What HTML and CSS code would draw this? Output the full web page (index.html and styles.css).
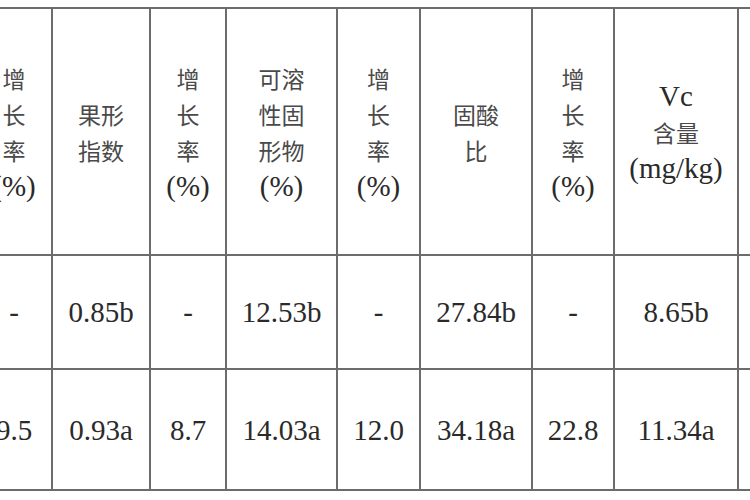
FILE: index.html
```html
<!DOCTYPE html>
<html lang="zh">
<head>
<meta charset="utf-8">
<title>表</title>
<link rel="stylesheet" href="styles.css">
</head>
<body>
<table class="data">
  <colgroup>
    <col class="c76"><col class="c98"><col class="c76"><col class="c111"><col class="c83"><col class="c112"><col class="c82"><col class="c124"><col class="c100">
  </colgroup>
  <tr class="head">
    <td><span class="zh">增<br>长<br>率</span><br>(%)</td>
    <td><span class="zh">果形<br>指数</span></td>
    <td><span class="zh">增<br>长<br>率</span><br>(%)</td>
    <td><span class="zh">可溶<br>性固<br>形物</span><br>(%)</td>
    <td><span class="zh">增<br>长<br>率</span><br>(%)</td>
    <td><span class="zh">固酸<br>比</span></td>
    <td><span class="zh">增<br>长<br>率</span><br>(%)</td>
    <td>Vc<br><span class="zh">含量</span><br>(mg/kg)</td>
    <td></td>
  </tr>
  <tr class="r1">
    <td>-</td><td>0.85b</td><td>-</td><td>12.53b</td><td>-</td><td>27.84b</td><td>-</td><td>8.65b</td><td></td>
  </tr>
  <tr class="r2">
    <td>9.5</td><td>0.93a</td><td>8.7</td><td>14.03a</td><td>12.0</td><td>34.18a</td><td>22.8</td><td>11.34a</td><td></td>
  </tr>
</table>
</body>
</html>
```
FILE: styles.css
```css
html, body {
  margin: 0;
  padding: 0;
  background: #ffffff;
  overflow: hidden;
  width: 750px;
  height: 500px;
}
.data {
  border-collapse: collapse;
  table-layout: fixed;
  width: 862px;
  margin-left: -25px;
  margin-top: 7px;
  font-family: "Liberation Serif", "Noto Sans CJK SC", serif;
  font-size: 29px;
  line-height: 36px;
  color: #2a2a2a;
}
.c76 { width: 76px; }
.c98 { width: 98px; }
.c111 { width: 111px; }
.c83 { width: 83px; }
.c112 { width: 112px; }
.c82 { width: 82px; }
.c124 { width: 124px; }
.c100 { width: 100px; }
.data td {
  border: 2px solid #6c6c6c;
  text-align: center;
  vertical-align: middle;
  padding: 0;
}
.zh {
  font-family: "Noto Sans CJK SC", sans-serif;
  font-size: 23px;
  color: #4a4a4a;
}
.head td { height: 245px; }
.r1 td { height: 112px; }
.r2 td { height: 119px; }
```
